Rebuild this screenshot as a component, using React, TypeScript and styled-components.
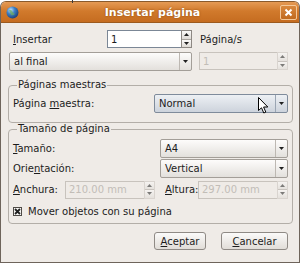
import styled, { createGlobalStyle } from "styled-components";

const GlobalStyle = createGlobalStyle`
  html, body {
    margin: 0;
    padding: 0;
    background: #ffffff;
  }
  body {
    font-family: "DejaVu Sans", "Noto Sans", sans-serif;
    font-size: 10px;
    color: #1c1c1c;
  }
  * {
    box-sizing: border-box;
  }
`;

const Screen = styled.div`
  position: relative;
  width: 300px;
  height: 265px;
  padding-top: 1px;
  overflow: hidden;
  &::before {
    content: "";
    position: absolute;
    left: 72px;
    top: 0;
    width: 1px;
    height: 3px;
    background: #3a3a3a;
  }
`;

const Window = styled.div`
  width: 300px;
  height: 262px;
  border: 1px solid #6e645b;
  border-top-color: #8a5a2c;
  border-radius: 6px 6px 0 0;
  background: #efebe7;
  overflow: hidden;
`;

const TitleBar = styled.div`
  height: 21px;
  display: flex;
  align-items: center;
  padding: 0 2px 0 5px;
  background: linear-gradient(#e59a55, #d17a2c 45%, #c56c20);
  border-bottom: 1px solid #9c5a1e;
`;

const Title = styled.div`
  flex: 1;
  text-align: center;
  font-weight: bold;
  font-size: 11px;
  color: #ffffff;
  text-shadow: 0 0 2px #8a4a12;
  padding-left: 6px;
`;

const CloseButton = styled.div`
  width: 17px;
  height: 15px;
  border: 1px solid #f3c89a;
  border-radius: 2px;
  background: linear-gradient(#d9893f, #c06a1f);
  display: flex;
  align-items: center;
  justify-content: center;
`;

const Content = styled.div`
  padding: 7px 0 0 7px;
`;

const TopGrid = styled.div`
  display: grid;
  grid-template-columns: 183px 89px;
  grid-auto-rows: 18px;
  column-gap: 7px;
  row-gap: 4px;
  margin-left: 1px;
`;

const Cell = styled.div`
  display: flex;
  align-items: center;
`;

const Label = styled.span<{ $pad?: number; $w?: number }>`
  padding-left: ${(p) => p.$pad ?? 0}px;
  width: ${(p) => (p.$w ? `${p.$w}px` : "auto")};
  flex-shrink: 0;
  white-space: nowrap;
`;

const Key = styled.span`
  text-decoration: underline;
  text-underline-offset: 1px;
`;

const SpinBox = styled.div<{ $w: number }>`
  display: flex;
  width: ${(p) => p.$w}px;
  height: 18px;
  margin-left: auto;
`;

const SpinField = styled.div<{ $disabled?: boolean }>`
  flex: 1;
  display: flex;
  align-items: center;
  padding-left: 3px;
  border: 1px solid ${(p) => (p.$disabled ? "#c8c3bd" : "#7b8796")};
  border-right: none;
  background: ${(p) => (p.$disabled ? "#efebe7" : "#ffffff")};
  color: ${(p) => (p.$disabled ? "#c2bdb7" : "#1c1c1c")};
`;

const SpinButtons = styled.div<{ $disabled?: boolean }>`
  width: 11px;
  display: flex;
  flex-direction: column;
  border: 1px solid ${(p) => (p.$disabled ? "#c8c3bd" : "#8d8883")};
  opacity: ${(p) => (p.$disabled ? 0.55 : 1)};
`;

const SpinButton = styled.div`
  flex: 1;
  display: flex;
  align-items: center;
  justify-content: center;
  background: linear-gradient(#fbfaf9, #dedad5);
  & + & {
    border-top: 1px solid #a9a49e;
  }
`;

const Combo = styled.div<{ $hover?: boolean; $w?: number }>`
  position: relative;
  display: flex;
  width: ${(p) => (p.$w ? `${p.$w}px` : "100%")};
  height: 19px;
  margin-left: auto;
  border: 1px solid ${(p) => (p.$hover ? "#7f8b9b" : "#a39e98")};
  border-radius: 2px;
  background: ${(p) =>
    p.$hover
      ? "linear-gradient(#edf0f4, #cdd3dc)"
      : "linear-gradient(#fdfcfb, #e3e0dc)"};
`;

const ComboText = styled.div`
  flex: 1;
  display: flex;
  align-items: center;
  padding-left: 4px;
`;

const ComboArrow = styled.div<{ $hover?: boolean }>`
  width: 12px;
  display: flex;
  align-items: center;
  justify-content: center;
  border-left: 1px solid ${(p) => (p.$hover ? "#9aa5b3" : "#bdb8b2")};
`;

const Frame = styled.fieldset<{ $top: number }>`
  width: 285px;
  margin: ${(p) => p.$top}px 0 0 0;
  padding: 3px 4px 0 4px;
  border: 1px solid #b3aea8;
  border-radius: 4px;
  min-width: 0;
`;

const Legend = styled.legend`
  padding: 0 1px;
  margin-left: 4px;
  line-height: 12px;
`;

const FormRow = styled.div<{ $gap?: number; $h?: number }>`
  display: flex;
  align-items: center;
  height: ${(p) => p.$h ?? 19}px;
  margin-top: ${(p) => p.$gap ?? 0}px;
`;

const Check = styled.div`
  width: 9px;
  height: 9px;
  border: 1px solid #4e4a46;
  background: #f7f6f4;
  display: flex;
  align-items: center;
  justify-content: center;
`;

const Cursor = styled.svg`
  position: absolute;
  left: 103px;
  top: 2px;
`;

const ButtonRow = styled.div`
  display: flex;
  justify-content: flex-end;
  gap: 15px;
  margin: 8px 11px 0 0;
`;

const Button = styled.div<{ $w: number }>`
  width: ${(p) => p.$w}px;
  height: 18px;
  display: flex;
  align-items: center;
  justify-content: center;
  border: 1px solid #8f8a85;
  border-radius: 3px;
  background: linear-gradient(#fbfaf9, #e1ddd8);
`;

const Arrow = ({ up }: { up?: boolean }) => (
  <svg width="5" height="3" viewBox="0 0 5 3">
    <path d={up ? "M0 3 L2.5 0 L5 3 Z" : "M0 0 L5 0 L2.5 3 Z"} fill="#202020" />
  </svg>
);

const Spin = ({ w, value, disabled }: { w: number; value: string; disabled?: boolean }) => (
  <SpinBox $w={w}>
    <SpinField $disabled={disabled}>{value}</SpinField>
    <SpinButtons $disabled={disabled}>
      <SpinButton>
        <Arrow up />
      </SpinButton>
      <SpinButton>
        <Arrow />
      </SpinButton>
    </SpinButtons>
  </SpinBox>
);

const Globe = () => (
  <svg width="13" height="13" viewBox="0 0 13 13">
    <defs>
      <radialGradient id="g" cx="0.35" cy="0.3" r="0.75">
        <stop offset="0" stopColor="#bfe0ff" />
        <stop offset="0.45" stopColor="#3c7fc4" />
        <stop offset="1" stopColor="#1d3f75" />
      </radialGradient>
    </defs>
    <circle cx="6.5" cy="6.5" r="6" fill="url(#g)" />
    <path d="M3 4 Q5 3 6 5 T9 8 Q7 10 5 9 Z" fill="#6fae5a" opacity="0.7" />
  </svg>
);

const App = () => {
  return (
    <Screen>
      <GlobalStyle />
      <Window>
        <TitleBar>
          <Globe />
          <Title>Insertar página</Title>
          <CloseButton>
            <svg width="9" height="9" viewBox="0 0 9 9">
              <path d="M1.5 1.5 L7.5 7.5 M7.5 1.5 L1.5 7.5" stroke="#ffffff" strokeWidth="2" />
            </svg>
          </CloseButton>
        </TitleBar>
        <Content>
          <TopGrid>
            <Cell>
              <Label $pad={4}>
                <Key>I</Key>nsertar
              </Label>
              <Spin w={85} value="1" />
            </Cell>
            <Cell>
              <Label $pad={1}>Página/s</Label>
            </Cell>
            <Cell>
              <Combo>
                <ComboText>al final</ComboText>
                <ComboArrow>
                  <Arrow />
                </ComboArrow>
              </Combo>
            </Cell>
            <Cell>
              <Spin w={89} value="1" disabled />
            </Cell>
          </TopGrid>

          <Frame $top={9}>
            <Legend>Páginas maestras</Legend>
            <FormRow>
              <Label>
                Página <Key>m</Key>aestra:
              </Label>
              <Combo $hover $w={134}>
                <ComboText>Normal</ComboText>
                <ComboArrow $hover>
                  <Arrow />
                </ComboArrow>
                <Cursor width="11" height="17" viewBox="0 0 11 17">
                  <path
                    d="M0.5 0.5 L0.5 13.5 L3.5 10.8 L5.8 16 L7.8 15.1 L5.6 10 L9.8 10 Z"
                    fill="#ffffff"
                    stroke="#000000"
                    strokeWidth="1"
                    strokeLinejoin="round"
                  />
                </Cursor>
              </Combo>
            </FormRow>
            <FormRow $h={9} />
          </Frame>

          <Frame $top={0}>
            <Legend>Tamaño de página</Legend>
            <FormRow $gap={1}>
              <Label>
                <Key>T</Key>amaño:
              </Label>
              <Combo $w={128}>
                <ComboText>A4</ComboText>
                <ComboArrow>
                  <Arrow />
                </ComboArrow>
              </Combo>
            </FormRow>
            <FormRow $gap={1}>
              <Label>
                Orie<Key>n</Key>tación:
              </Label>
              <Combo $w={128}>
                <ComboText>Vertical</ComboText>
                <ComboArrow>
                  <Arrow />
                </ComboArrow>
              </Combo>
            </FormRow>
            <FormRow $gap={3} $h={17}>
              <Label $w={52}>
                <Key>A</Key>nchura:
              </Label>
              <Spin w={90} value="210.00 mm" disabled />
              <Label $pad={10} $w={43}>
                <Key>A</Key>ltura:
              </Label>
              <Spin w={90} value="297.00 mm" disabled />
            </FormRow>
            <FormRow $gap={7} $h={12}>
              <Check>
                <svg width="7" height="7" viewBox="0 0 7 7">
                  <path d="M1 1 L6 6 M6 1 L1 6" stroke="#202020" strokeWidth="1.8" />
                </svg>
              </Check>
              <Label $pad={6}>Mover objetos con su página</Label>
            </FormRow>
            <FormRow $h={6} />
          </Frame>

          <ButtonRow>
            <Button $w={52}>
              <span>
                <Key>A</Key>ceptar
              </span>
            </Button>
            <Button $w={67}>
              <span>
                <Key>C</Key>ancelar
              </span>
            </Button>
          </ButtonRow>
        </Content>
      </Window>
    </Screen>
  );
};

export default App;
